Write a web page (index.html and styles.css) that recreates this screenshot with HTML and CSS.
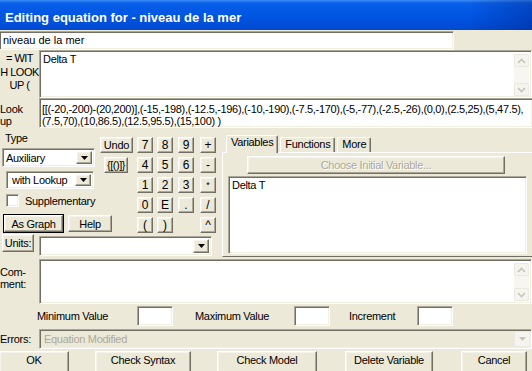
FILE: index.html
```html
<!DOCTYPE html>
<html lang="fr">

<head>
    <meta charset="UTF-8" />
    <title>Editing equation for - niveau de la mer</title>
    <link rel="stylesheet" href="styles.css">
</head>

<body>
    <div class="titlebar">Editing equation for - niveau de la mer</div>

    <!-- variable name -->
    <div class="name-row">
        <div class="field name-field">niveau de la mer</div>
    </div>

    <!-- equation -->
    <div class="eq-row">
        <div class="side-label eq-label">= WIT<br>H LOOK<br>UP (</div>
        <div class="field eq-box">
            <div class="box-text">Delta T</div>
            <div class="vscroll">
                <div class="sb-btn"><svg width="9" height="6" viewBox="0 0 9 6"><path d="M1 5 L4.5 1.5 L8 5" fill="none" stroke="#C7C5B8" stroke-width="1.6"/></svg></div>
                <div class="sb-btn"><svg width="9" height="6" viewBox="0 0 9 6"><path d="M1 1 L4.5 4.5 L8 1" fill="none" stroke="#C7C5B8" stroke-width="1.6"/></svg></div>
            </div>
        </div>
    </div>

    <!-- lookup -->
    <div class="lookup-row">
        <div class="side-label look-label">Look<br>up</div>
        <div class="field lookup-box">[[(-20,-200)-(20,200)],(-15,-198),(-12.5,-196),(-10,-190),(-7.5,-170),(-5,-77),(-2.5,-26),(0,0),(2.5,25),(5,47.5),<br>(7.5,70),(10,86.5),(12.5,95.5),(15,100) )</div>
    </div>

    <div class="middle">
        <div class="left-pane">
            <div class="tools">
                <div class="type-col">
                    <div class="type-label">Type</div>
                    <div class="field select sel-type">
                        <span class="sel-text">Auxiliary</span>
                        <div class="btn drop-btn"><svg width="7" height="4" viewBox="0 0 7 4"><path d="M0 0 H7 L3.5 4 Z" fill="#000"/></svg></div>
                    </div>
                    <div class="field select sel-sub">
                        <span class="sel-text">with Lookup</span>
                        <div class="btn drop-btn"><svg width="7" height="4" viewBox="0 0 7 4"><path d="M0 0 H7 L3.5 4 Z" fill="#000"/></svg></div>
                    </div>
                    <div class="check-row">
                        <div class="field checkbox"></div>
                        <span>Supplementary</span>
                    </div>
                    <div class="graph-row">
                        <div class="btn default-btn">As Graph</div>
                        <div class="btn help-btn">Help</div>
                    </div>
                </div>

                <div class="keypad">
                    <div class="btn key wide">Undo</div>
                    <div class="btn key">7</div>
                    <div class="btn key">8</div>
                    <div class="btn key">9</div>
                    <div class="btn key">+</div>

                    <div class="btn key braces">{[()]}</div>
                    <div class="btn key">4</div>
                    <div class="btn key">5</div>
                    <div class="btn key">6</div>
                    <div class="btn key">-</div>

                    <div></div>
                    <div class="btn key">1</div>
                    <div class="btn key">2</div>
                    <div class="btn key">3</div>
                    <div class="btn key small">*</div>

                    <div></div>
                    <div class="btn key">0</div>
                    <div class="btn key">E</div>
                    <div class="btn key">.</div>
                    <div class="btn key">/</div>

                    <div></div>
                    <div class="btn key">(</div>
                    <div class="btn key">)</div>
                    <div></div>
                    <div class="btn key">^</div>
                </div>
            </div>

            <div class="units-row">
                <div class="btn units-btn">Units:</div>
                <div class="field select sel-units">
                    <span class="sel-text"></span>
                    <div class="btn drop-btn"><svg width="7" height="4" viewBox="0 0 7 4"><path d="M0 0 H7 L3.5 4 Z" fill="#000"/></svg></div>
                </div>
            </div>
        </div>

        <div class="tab-pane">
            <div class="tab-strip">
                <div class="tab active">Variables</div>
                <div class="tab">Functions</div>
                <div class="tab">More</div>
            </div>
            <div class="tab-body">
                <div class="btn choose-btn">Choose Initial Variable...</div>
                <div class="field var-list">Delta T</div>
            </div>
        </div>
    </div>

    <!-- comment -->
    <div class="comment-row">
        <div class="side-label com-label">Com-<br>ment:</div>
        <div class="field comment-box">
            <div class="box-text"></div>
            <div class="vscroll">
                <div class="sb-btn"><svg width="9" height="6" viewBox="0 0 9 6"><path d="M1 5 L4.5 1.5 L8 5" fill="none" stroke="#C7C5B8" stroke-width="1.6"/></svg></div>
                <div class="sb-btn"><svg width="9" height="6" viewBox="0 0 9 6"><path d="M1 1 L4.5 4.5 L8 1" fill="none" stroke="#C7C5B8" stroke-width="1.6"/></svg></div>
            </div>
        </div>
    </div>

    <div class="range-row">
        <span class="range-label min-label">Minimum Value</span>
        <div class="field range-box"></div>
        <span class="range-label max-label">Maximum Value</span>
        <div class="field range-box"></div>
        <span class="range-label inc-label">Increment</span>
        <div class="field range-box"></div>
    </div>

    <div class="errors-row">
        <div class="side-label err-label">Errors:</div>
        <div class="field err-box">
            <span class="err-text">Equation Modified</span>
            <div class="sb-btn err-drop"><svg width="7" height="4" viewBox="0 0 7 4"><path d="M0 0 H7 L3.5 4 Z" fill="#C7C5B8"/></svg></div>
        </div>
    </div>

    <div class="button-row">
        <div class="btn action ok">OK</div>
        <div class="btn action syntax">Check Syntax</div>
        <div class="btn action model">Check Model</div>
        <div class="btn action delete">Delete Variable</div>
        <div class="btn action cancel">Cancel</div>
    </div>
</body>

</html>
```

FILE: styles.css
```css
body {
    margin: 0;
    width: 532px;
    height: 371px;
    overflow: hidden;
    background-color: #ece9d8;
    font-family: "Liberation Sans", Arial, sans-serif;
    font-size: 11px;
    letter-spacing: -0.3px;
    color: #000;
}

.titlebar {
    height: 30px;
    box-sizing: border-box;
    padding: 4px 0 0 5px;
    display: flex;
    align-items: center;
    color: #fff;
    font-weight: bold;
    font-size: 13px;
    letter-spacing: 0;
    background:
        linear-gradient(to right, rgba(0, 0, 0, 0) 88%, rgba(0, 20, 110, 0.3)),
        linear-gradient(#3a8cf8 0, #0a60e8 3px, #055ae6 8px, #0054e0 18px, #0049d0 30px);
}

/* sunken white box */
.field {
    box-sizing: border-box;
    background: #fff;
    border-top: 1px solid #aca899;
    border-left: 1px solid #aca899;
    border-right: 1px solid #fff;
    border-bottom: 1px solid #fff;
    box-shadow: inset 1px 1px 0 #716f64, inset -1px -1px 0 #f1efe2;
}

/* raised button */
.btn {
    box-sizing: border-box;
    background: #ece9d8;
    border-top: 1px solid #fff;
    border-left: 1px solid #fff;
    border-right: 1px solid #716f64;
    border-bottom: 1px solid #716f64;
    box-shadow: inset -1px -1px 0 #aca899, inset 1px 1px 0 #f5f4ea;
    display: flex;
    align-items: center;
    justify-content: center;
}

.side-label {
    width: 39px;
    flex-shrink: 0;
    white-space: nowrap;
}

.name-row {
    margin-top: 1px;
    height: 19px;
    display: flex;
}

.name-field {
    width: 454px;
    border-left: none;
    padding-left: 3px;
    line-height: 17px;
    letter-spacing: 0;
}

.eq-row {
    height: 48px;
    display: flex;
}

.eq-label {
    text-align: center;
    line-height: 13.5px;
    padding-top: 2px;
    letter-spacing: -0.5px;
}

.eq-box,
.comment-box {
    flex: 1;
    display: flex;
    padding: 2px 1px 1px 3px;
}

.box-text {
    flex: 1;
    line-height: 13px;
}

.vscroll {
    width: 15px;
    display: flex;
    flex-direction: column;
    justify-content: space-between;
    background: #f7f6f1;
    margin: 1px 1px 0 0;
}

.sb-btn {
    height: 13px;
    box-sizing: border-box;
    border: 1px solid #ebe9e0;
    border-radius: 2px;
    background: #f5f4ef;
    display: flex;
    align-items: center;
    justify-content: center;
}

.lookup-row {
    height: 30px;
    display: flex;
}

.look-label {
    line-height: 12px;
    padding-top: 5px;
}

.lookup-box {
    flex: 1;
    border-right: none;
    line-height: 12px;
    padding: 4px 0 0 2px;
    white-space: nowrap;
    overflow: hidden;
    letter-spacing: -0.32px;
}

.middle {
    height: 129px;
    display: flex;
}

.left-pane {
    width: 222px;
    display: flex;
    flex-direction: column;
}

.tools {
    height: 105px;
    display: flex;
}

.type-col {
    width: 100px;
    flex-shrink: 0;
}

.type-label {
    margin: 3px 0 0 5px;
    line-height: 14px;
}

.select {
    display: flex;
    align-items: stretch;
    padding: 2px;
}

.sel-text {
    flex: 1;
    line-height: 14px;
    padding-left: 1px;
}

.drop-btn {
    width: 16px;
}

.sel-type {
    margin: 3px 0 0 2px;
    width: 93px;
    height: 19px;
}

.sel-sub {
    margin: 4px 0 0 6px;
    width: 88px;
    height: 18px;
}

.sel-sub .sel-text {
    padding-left: 3px;
    line-height: 13px;
}

.check-row {
    margin: 5px 0 0 6px;
    height: 13px;
    display: flex;
    align-items: center;
    gap: 6px;
    white-space: nowrap;
}

.checkbox {
    width: 13px;
    height: 13px;
}

.graph-row {
    margin: 8px 0 0 4px;
    display: flex;
    gap: 5px;
    width: 120px;
}

.default-btn {
    width: 59px;
    height: 17px;
    outline: 1px solid #000;
    outline-offset: 0;
}

.help-btn {
    width: 44px;
    height: 17px;
}

.keypad {
    padding-top: 9px;
    display: grid;
    grid-template-columns: 37px 20px 21px 22px 17px;
    grid-auto-rows: 20px;
}

.key {
    width: 16px;
    height: 16px;
    font-size: 12px;
    letter-spacing: 0;
}

.key.wide {
    width: 33px;
    font-size: 11px;
    letter-spacing: -0.2px;
}

.key.braces {
    width: 24px;
    margin-left: 4px;
    font-size: 11px;
    letter-spacing: -0.5px;
}

.key.small {
    font-size: 9px;
}

.units-row {
    height: 24px;
    display: flex;
    align-items: flex-start;
}

.units-btn {
    margin: 1px 0 0 2px;
    width: 32px;
    height: 18px;
}

.sel-units {
    margin: 3px 0 0 5px;
    width: 173px;
    height: 20px;
}

.tab-pane {
    flex: 1;
    display: flex;
    flex-direction: column;
}

.tab-strip {
    height: 24px;
    display: flex;
    align-items: flex-end;
    padding-left: 4px;
    gap: 2px;
}

.tab {
    box-sizing: border-box;
    height: 15px;
    padding: 0 4px;
    border-top: 1px solid #fff;
    border-left: 1px solid #fff;
    border-right: 1px solid #716f64;
    box-shadow: inset -1px 0 0 #aca899;
    border-radius: 2px 2px 0 0;
    line-height: 13px;
}

.tab.active {
    height: 18px;
    margin-bottom: -1px;
    background: #ece9d8;
    position: relative;
    z-index: 1;
}

.tab-body {
    flex: 1;
    box-sizing: border-box;
    border-top: 1px solid #fff;
    border-left: 1px solid #fff;
    border-bottom: 1px solid #716f64;
    padding: 3px 0 0 5px;
}

.choose-btn {
    margin-left: 19px;
    width: 258px;
    height: 18px;
    color: #aca899;
    text-shadow: 1px 1px 0 #fff;
}

.var-list {
    margin-top: 2px;
    width: 299px;
    height: 78px;
    padding: 2px 0 0 3px;
    line-height: 13px;
}

.comment-row {
    margin-top: 2px;
    height: 45px;
    display: flex;
}

.com-label {
    line-height: 12px;
    padding-top: 7px;
}

.comment-box .vscroll {
    margin-bottom: 1px;
}

.range-row {
    height: 24px;
    display: flex;
    align-items: center;
    padding-left: 37px;
}

.range-box {
    width: 36px;
    height: 20px;
}

.min-label {
    width: 100px;
}

.max-label {
    margin-left: 22px;
    width: 99px;
}

.inc-label {
    margin-left: 19px;
    width: 68px;
}

.errors-row {
    height: 22px;
    display: flex;
    align-items: center;
}

.err-box {
    flex: 1;
    height: 20px;
    background: #ece9d8;
    display: flex;
    align-items: center;
    padding: 2px 1px 2px 4px;
}

.err-text {
    flex: 1;
    color: #aca899;
}

.err-drop {
    width: 16px;
    height: 16px;
}

.button-row {
    margin-top: 1px;
    display: flex;
}

.action {
    height: 24px;
    align-items: flex-start;
    line-height: 14px;
    padding-top: 1px;
}

.ok {
    width: 69px;
    border-left: none;
}

.syntax {
    margin-left: 26px;
    width: 96px;
}

.model {
    margin-left: 26px;
    width: 100px;
}

.delete {
    margin-left: 28px;
    width: 88px;
}

.cancel {
    margin-left: 28px;
    width: 66px;
}
```
